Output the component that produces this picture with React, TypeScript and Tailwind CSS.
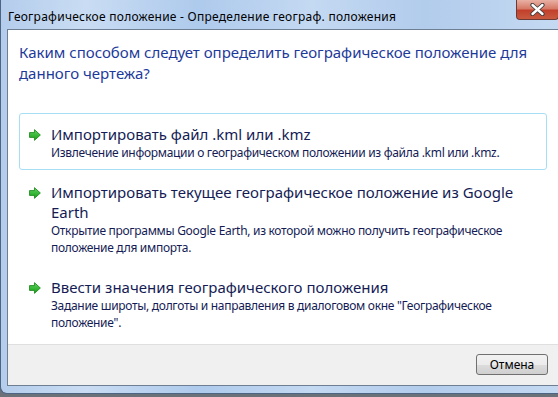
const font = { fontFamily: '"Noto Sans", "Open Sans", sans-serif' };

function GreenArrow() {
  return (
    <svg width="12" height="12" viewBox="0 0 11 11" className="shrink-0">
      <defs>
        <linearGradient id="ga" x1="0" y1="0" x2="0" y2="1">
          <stop offset="0" stopColor="#5fd35f" />
          <stop offset="1" stopColor="#16a016" />
        </linearGradient>
      </defs>
      <path
        d="M0.5 3.3 H5 V0.6 L10.4 5.5 L5 10.4 V7.7 H0.5 Z"
        fill="url(#ga)"
        stroke="#1c8a1c"
        strokeWidth="0.8"
        strokeLinejoin="round"
      />
    </svg>
  );
}

type Option = { title: string[]; desc: string[]; boxed?: boolean };

const options: Option[] = [
  {
    title: ["Импортировать файл .kml или .kmz"],
    desc: ["Извлечение информации о географическом положении из файла .kml или .kmz."],
    boxed: true,
  },
  {
    title: ["Импортировать текущее географическое положение из Google", "Earth"],
    desc: [
      "Открытие программы Google Earth, из которой можно получить географическое",
      "положение для импорта.",
    ],
  },
  {
    title: ["Ввести значения географического положения"],
    desc: [
      'Задание широты, долготы и направления в диалоговом окне "Географическое',
      'положение".',
    ],
  },
];

function CommandLink({ opt }: { opt: Option }) {
  return (
    <div
      className={
        "w-[528px] flex gap-[10px] pl-[9px] pt-[10px] pb-[8px] rounded-[3px] border " +
        (opt.boxed ? "border-[#a6dff5]" : "border-transparent")
      }
    >
      <div className="pt-[5px]">
        <GreenArrow />
      </div>
      <div className="flex flex-col">
        <div className="text-[15px] leading-[20px] text-[#151c55]">
          {opt.title.map((t) => (
            <div key={t} className="whitespace-nowrap">{t}</div>
          ))}
        </div>
        <div className="text-[12px] leading-[17px] tracking-[-0.3px] text-[#151c55]">
          {opt.desc.map((t) => (
            <div key={t} className="whitespace-nowrap">{t}</div>
          ))}
        </div>
      </div>
    </div>
  );
}

export default function App() {
  return (
    <div className="w-[558px] h-[397px] overflow-hidden bg-[#6a7179]" style={font}>
      <div className="w-[566px] h-[394px] flex flex-col rounded-b-[7px] border-l border-b border-[#4d6482] pl-[6px] pr-[7px] bg-[linear-gradient(90deg,#b4cdec_0%,#c9dcf3_15%,#aecaec_35%,#c4d9f2_55%,#b2ccec_75%,#c6daf2_100%)]">
        {/* Title bar */}
        <div className="h-[29px] flex items-start">
          <span className="pt-[9px] pl-[1px] text-[12px] leading-[16px] tracking-[0.25px] text-black whitespace-nowrap">
            Географическое положение - Определение географ. положения
          </span>
          <div className="ml-auto w-[43px] h-[20px] flex items-center justify-center rounded-b-[4px] border border-t-0 border-[#6b3a34] bg-[linear-gradient(180deg,#e8b1a4_0%,#d77a68_45%,#c2402b_55%,#c85a40_100%)]">
            <svg width="15" height="13" viewBox="0 0 15 13">
              <path
                d="M2.5 2 L12.5 11 M12.5 2 L2.5 11"
                stroke="#3b3b3b"
                strokeWidth="4.2"
                strokeLinecap="round"
              />
              <path
                d="M2.5 2 L12.5 11 M12.5 2 L2.5 11"
                stroke="#ffffff"
                strokeWidth="2.4"
                strokeLinecap="round"
              />
            </svg>
          </div>
        </div>

        {/* Client area */}
        <div className="flex flex-col border border-[#6f7f93] bg-white">
          <div className="h-[315px] flex flex-col pt-[12px] pl-[11px] border-b border-[#dfdfdf]">
            <div className="text-[15px] leading-[21px] text-[#1d3a9b]">
              <div className="whitespace-nowrap">
                Каким способом следует определить географическое положение для
              </div>
              <div>данного чертежа?</div>
            </div>
            <div className="mt-[29px] flex flex-col gap-[1px]">
              {options.map((o) => (
                <CommandLink key={o.title[0]} opt={o} />
              ))}
            </div>
          </div>
          <div className="h-[40px] bg-[#f0f0f0] flex justify-end pt-[9px] pr-[10px]">
            <button className="w-[72px] h-[21px] rounded-[3px] border border-[#707070] text-[12px] text-black bg-[linear-gradient(180deg,#f2f2f2_0%,#ebebeb_50%,#dddddd_50%,#cfcfcf_100%)]">
              Отмена
            </button>
          </div>
        </div>

        {/* Bottom frame */}
        <div className="flex-1" />
      </div>
    </div>
  );
}
